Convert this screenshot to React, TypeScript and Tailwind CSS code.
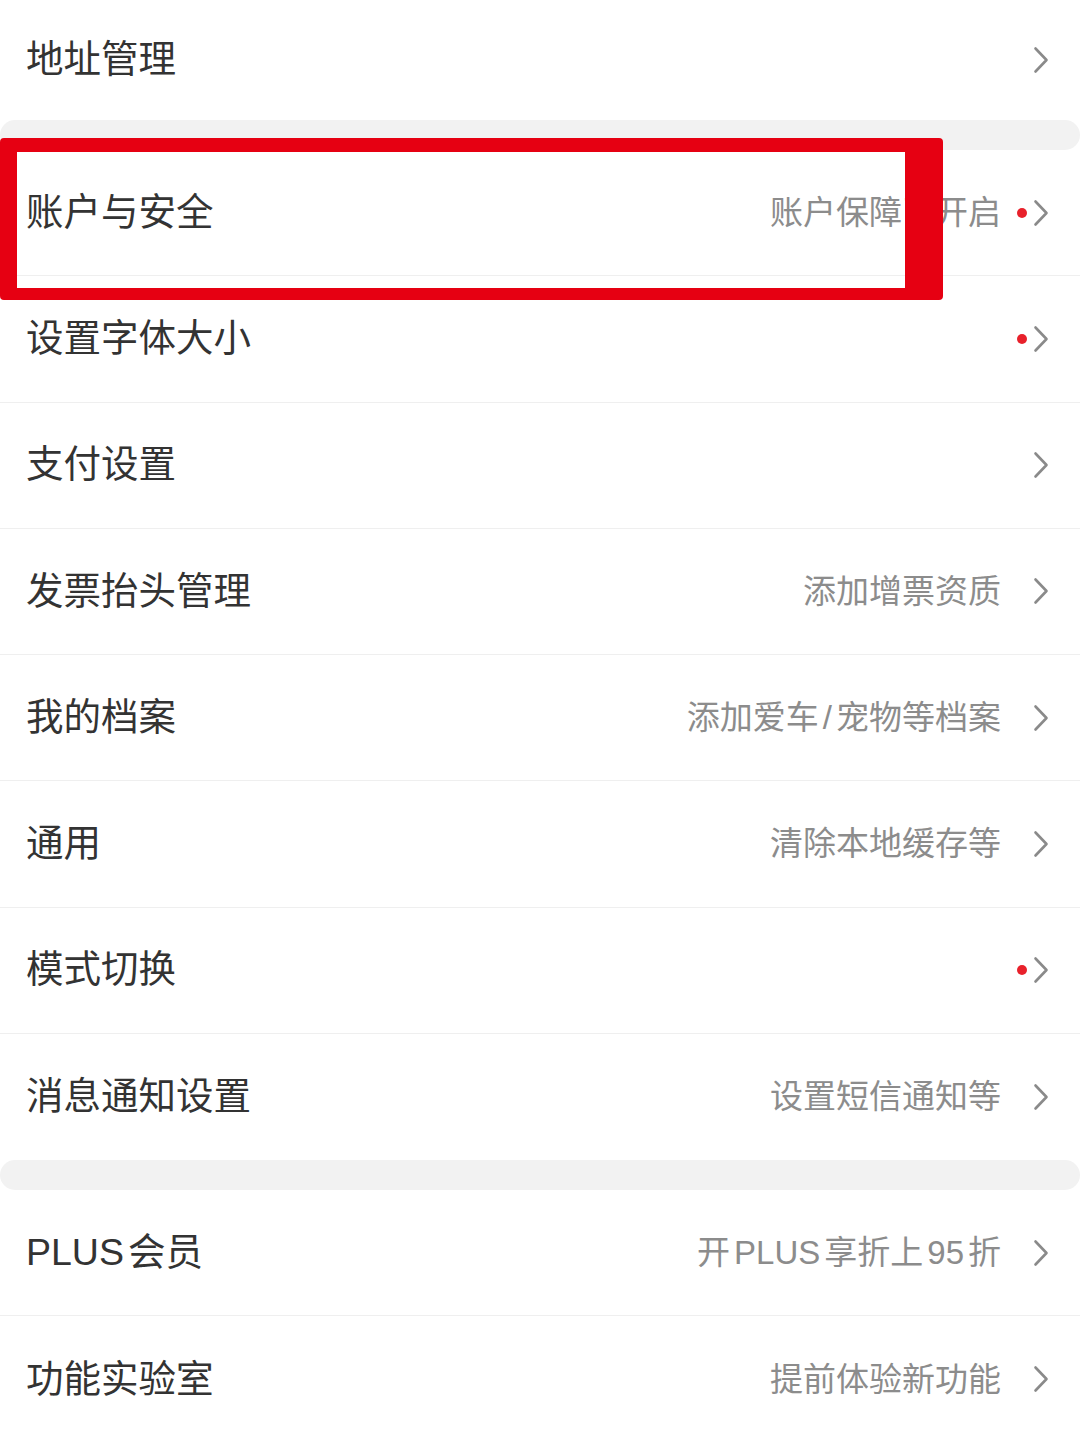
type Item = {
  title: string;
  hint?: string;
  dot?: boolean;
};

const firstGroup: Item[] = [{ title: '地址管理' }];

const secondGroup: Item[] = [
  { title: '账户与安全', hint: '账户保障已开启', dot: true },
  { title: '设置字体大小', dot: true },
  { title: '支付设置' },
  { title: '发票抬头管理', hint: '添加增票资质' },
  { title: '我的档案', hint: '添加爱车/宠物等档案' },
  { title: '通用', hint: '清除本地缓存等' },
  { title: '模式切换', dot: true },
  { title: '消息通知设置', hint: '设置短信通知等' },
];

const thirdGroup: Item[] = [
  { title: 'PLUS会员', hint: '开PLUS享折上95折' },
  { title: '功能实验室', hint: '提前体验新功能' },
];

// latin runs get a little breathing room next to CJK, like the iOS renderer does
function Mixed({ text }: { text: string }) {
  const parts = text.split(/([A-Za-z0-9/]+)/).filter(Boolean);
  return (
    <>
      {parts.map((p, i) =>
        /^[A-Za-z0-9/]+$/.test(p) ? (
          <span key={i} className={i === 0 ? 'pr-[4px]' : 'px-[4px]'}>
            {p}
          </span>
        ) : (
          <span key={i}>{p}</span>
        ),
      )}
    </>
  );
}

function Chevron() {
  return (
    <svg width="16" height="28" viewBox="0 0 16 28" fill="none" className="shrink-0">
      <polyline
        points="2.5,2.5 13.5,14 2.5,25.5"
        stroke="#8a8a8a"
        strokeWidth="2.6"
        strokeLinecap="round"
        strokeLinejoin="round"
      />
    </svg>
  );
}

function Row({ item, last, tall }: { item: Item; last: boolean; tall?: boolean }) {
  return (
    <div
      className={`flex items-center justify-between pl-[26px] pr-[31px] ${
        tall ? 'h-[120px]' : 'h-[126.25px]'
      } ${last ? '' : 'border-b border-[#efefef]'}`}
    >
      <span className="whitespace-nowrap text-[37.5px] leading-none text-[#333333]">
        <Mixed text={item.title} />
      </span>
      <div className="flex items-center">
        {item.hint && (
          <span className="whitespace-nowrap text-[33px] leading-none text-[#8c8c8c]">
            <Mixed text={item.hint} />
          </span>
        )}
        <div className="flex w-[32px] justify-end pr-[6px]">
          {item.dot && <span className="h-[10px] w-[10px] rounded-full bg-[#e8212b]" />}
        </div>
        <Chevron />
      </div>
    </div>
  );
}

function Group({ items, tall }: { items: Item[]; tall?: boolean }) {
  return (
    <div className="bg-white">
      {items.map((item, i) => (
        <Row key={item.title} item={item} last={i === items.length - 1} tall={tall} />
      ))}
    </div>
  );
}

function Gap() {
  return <div className="h-[30px] rounded-full bg-[#f2f2f2]" />;
}

export default function App() {
  return (
    <div
      className="relative h-[1440px] w-[1080px] overflow-hidden bg-white"
      style={{ fontFamily: '"Liberation Sans", "Noto Sans CJK SC", sans-serif' }}
    >
      <Group items={firstGroup} tall />
      <Gap />
      <Group items={secondGroup} />
      <Gap />
      <Group items={thirdGroup} />

      {/* hand-drawn red highlight box */}
      <div className="pointer-events-none absolute left-0 top-[138px] h-[162px] w-[943px] rounded-[4px] border-b-[12px] border-l-[17px] border-r-[38px] border-t-[14px] border-[#e60012]" />
    </div>
  );
}
